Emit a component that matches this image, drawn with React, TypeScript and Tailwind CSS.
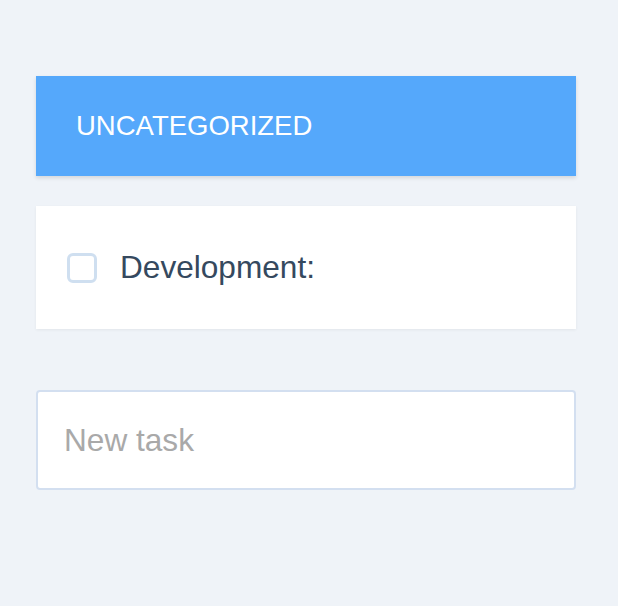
import React, { useState } from 'react';

const App: React.FC = () => {
  const [task, setTask] = useState('');
  const [done, setDone] = useState(false);

  return (
    <div
      className="min-h-screen bg-[#eff3f8] px-[36px] pt-[76px]"
      style={{ fontFamily: '"Liberation Sans", Arial, sans-serif' }}
    >
      <div className="w-[540px]">
        <div className="flex h-[100px] items-center bg-[#55a8fb] pl-[40px] shadow-[0_2px_4px_rgba(0,0,0,0.12)]">
          <h2 className="text-[27.5px] font-normal uppercase leading-none text-white">Uncategorized</h2>
        </div>

        <div className="mt-[30px] flex h-[123px] items-center bg-white pl-[31px] shadow-[0_1px_3px_rgba(0,0,0,0.06)]">
          <button
            onClick={() => setDone(!done)}
            className="h-[30px] w-[30px] shrink-0 rounded-[6px] border-[3px] border-[#cfdff0] bg-white"
          />
          <span className="ml-[23px] text-[31.6px] leading-none text-[#35495e]">Development:</span>
        </div>

        <input
          value={task}
          onChange={(e) => setTask(e.target.value)}
          placeholder="New task"
          className="mt-[61px] block h-[100px] w-full rounded-[4px] border-2 border-[#d3dff0] bg-white px-[26px] text-[31.6px] text-[#35495e] outline-none placeholder:text-[#a9a9a9]"
        />
      </div>
    </div>
  );
};

export default App;
